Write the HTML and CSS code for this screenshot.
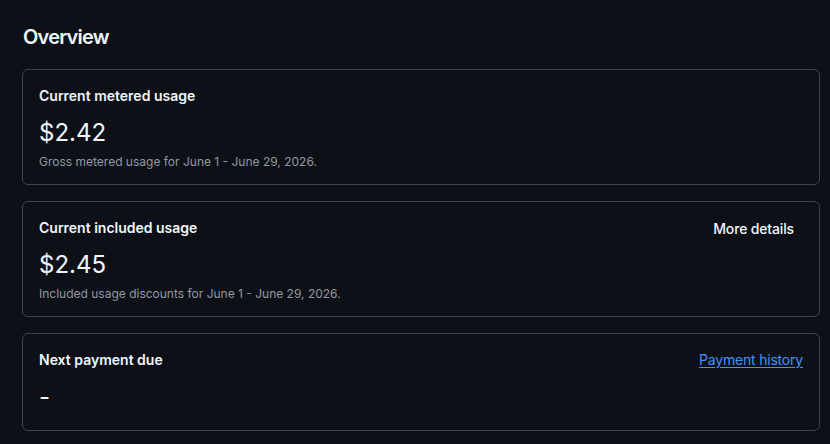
FILE: index.html
```html
<!DOCTYPE html>
<html lang="en">
<head>
<meta charset="utf-8">
<title>Overview</title>
<link rel="stylesheet" href="styles.css">
</head>
<body>
<main class="page">
  <h2 class="page-title">Overview</h2>
  <section class="card card--with-note">
    <div class="card-head">
      <h3 class="card-title">Current metered usage</h3>
    </div>
    <div class="card-value">$2.42</div>
    <p class="card-note">Gross metered usage for June 1 - June 29, 2026.</p>
  </section>
  <section class="card card--with-note">
    <div class="card-head">
      <h3 class="card-title">Current included usage</h3>
      <button class="btn-invisible" type="button">More details</button>
    </div>
    <div class="card-value">$2.45</div>
    <p class="card-note">Included usage discounts for June 1 - June 29, 2026.</p>
  </section>
  <section class="card">
    <div class="card-head">
      <h3 class="card-title">Next payment due</h3>
      <a class="link" href="#">Payment history</a>
    </div>
    <div class="card-value">-</div>
  </section>
</main>
</body>
</html>
```
FILE: styles.css
```css
* { box-sizing: border-box; }
html, body {
  margin: 0;
  background: #0d1117;
  color: #f0f6fc;
  font-family: Inter, "Noto Sans", "Liberation Sans", sans-serif;
}
.page {
  padding: 22px 10px 0 22px;
  display: flex;
  flex-direction: column;
  gap: 16px;
}
.page-title {
  margin: 0 0 1px 1px;
  font-size: 20px;
  line-height: 30px;
  font-weight: 600;
  letter-spacing: -0.8px;
  color: #f0f6fc;
}
.card {
  border: 1px solid #3d444d;
  border-radius: 6px;
  padding: 16px 16px 17px;
  display: flex;
  flex-direction: column;
}
.card--with-note { padding-bottom: 13px; }
.card-head {
  display: flex;
  justify-content: space-between;
  align-items: center;
  height: 20px;
}
.card-title {
  margin: 0;
  font-size: 14px;
  line-height: 20px;
  font-weight: 600;
  color: #f0f6fc;
}
.btn-invisible {
  background: none;
  border: 0;
  padding: 0 9px 0 0;
  margin-top: 1px;
  font: inherit;
  font-size: 14px;
  font-weight: 500;
  line-height: 20px;
  letter-spacing: -0.15px;
  color: #f0f6fc;
  cursor: pointer;
}
.link {
  font-size: 14px;
  line-height: 20px;
  letter-spacing: -0.2px;
  color: #4493f8;
  text-decoration: underline;
  text-underline-offset: 2px;
}
.card-value {
  margin-top: 11px;
  font-size: 24px;
  line-height: 32px;
  font-weight: 400;
  color: #f0f6fc;
}
.card-note {
  margin: 4px 0 0;
  font-size: 12px;
  line-height: 18px;
  color: #9198a1;
}
```
